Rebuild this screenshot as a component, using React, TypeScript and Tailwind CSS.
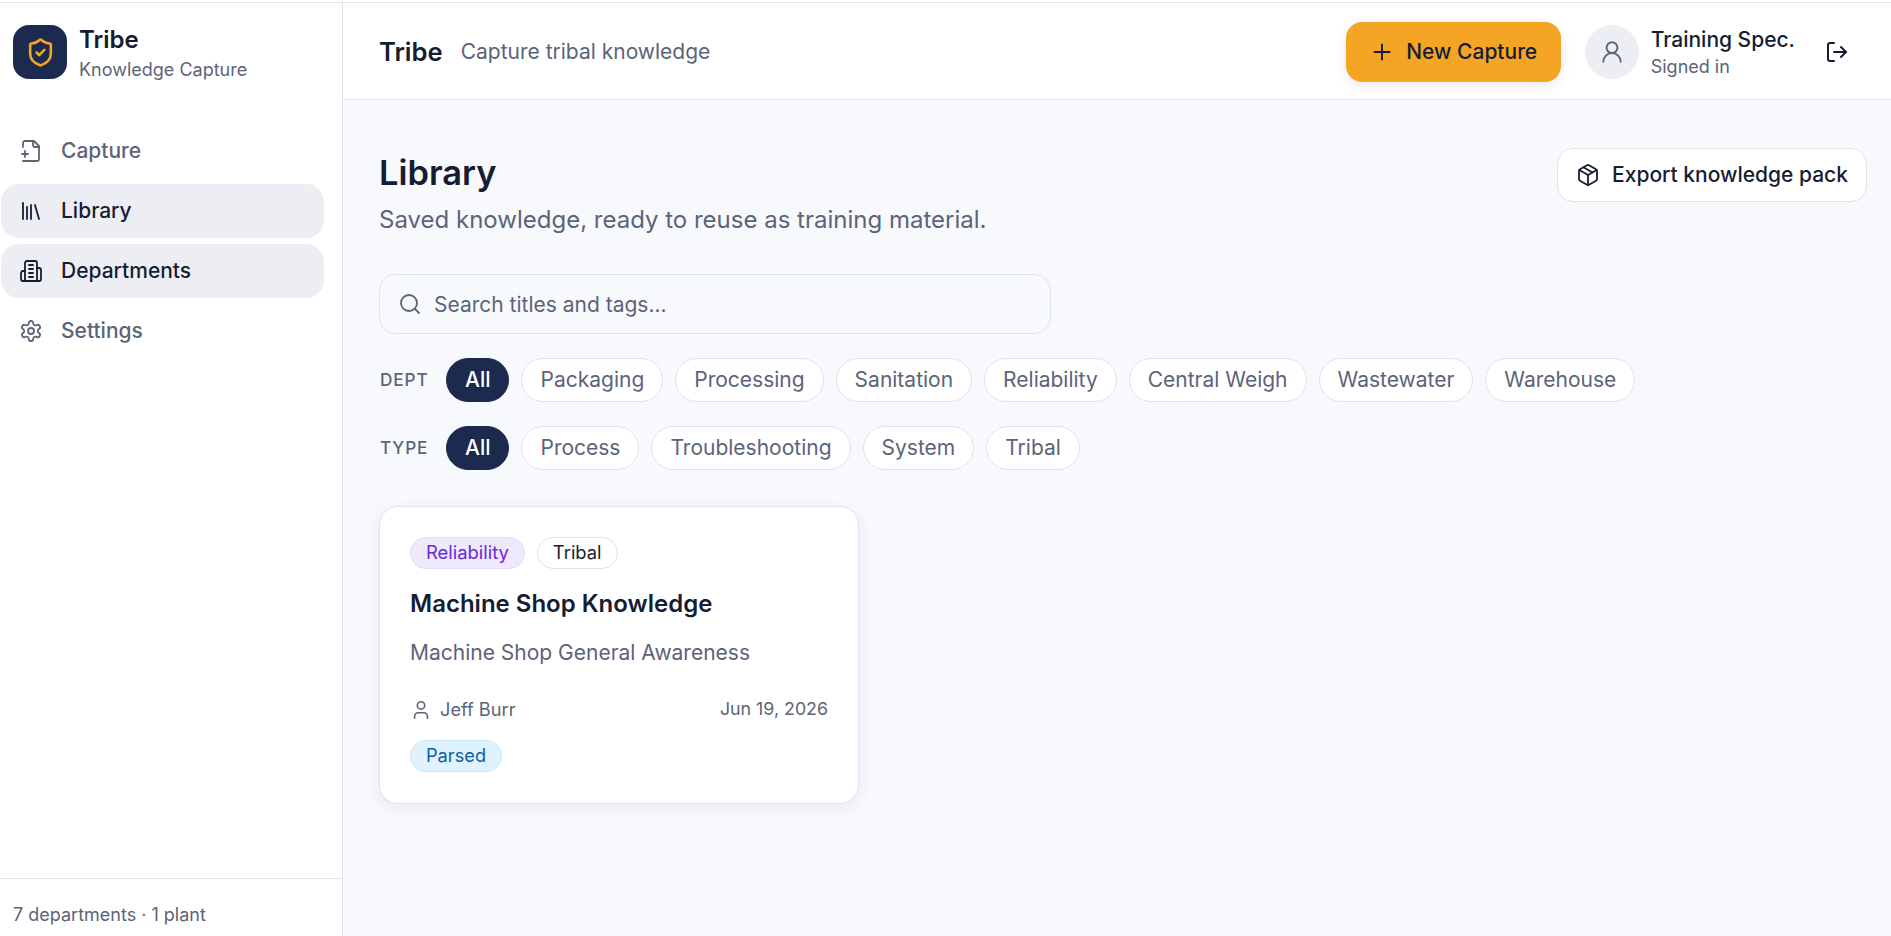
import { Library, LogOut, Package, Plus, Search, ShieldCheck, User, UserRound } from "lucide-react";

const depts = ["All", "Packaging", "Processing", "Sanitation", "Reliability", "Central Weigh", "Wastewater", "Warehouse"];
const types = ["All", "Process", "Troubleshooting", "System", "Tribal"];

function FilePlusIcon() {
  return (
    <svg width="24" height="24" viewBox="0 0 24 24" fill="none" stroke="currentColor" strokeWidth="1.8" strokeLinecap="round" strokeLinejoin="round">
      <path d="M4 22h14a2 2 0 0 0 2-2V7l-5-5H6a2 2 0 0 0-2 2v4" />
      <path d="M14 2v4a2 2 0 0 0 2 2h4" />
      <path d="M3 15h6" />
      <path d="M6 12v6" />
    </svg>
  );
}

function BuildingIcon() {
  return (
    <svg width="24" height="24" viewBox="0 0 24 24" fill="none" stroke="currentColor" strokeWidth="1.8" strokeLinecap="round" strokeLinejoin="round">
      <path d="M6 22V4a2 2 0 0 1 2-2h8a2 2 0 0 1 2 2v18Z" />
      <path d="M6 12H4a2 2 0 0 0-2 2v6a2 2 0 0 0 2 2h2" />
      <path d="M18 9h2a2 2 0 0 1 2 2v9a2 2 0 0 1-2 2h-2" />
      <path d="M10 6h4" />
      <path d="M10 10h4" />
      <path d="M10 14h4" />
      <path d="M10 18h4" />
    </svg>
  );
}

function GearIcon() {
  return (
    <svg width="24" height="24" viewBox="0 0 24 24" fill="none" stroke="currentColor" strokeWidth="1.8" strokeLinecap="round" strokeLinejoin="round">
      <path d="M12.22 2h-.44a2 2 0 0 0-2 2v.18a2 2 0 0 1-1 1.73l-.43.25a2 2 0 0 1-2 0l-.15-.08a2 2 0 0 0-2.73.73l-.22.38a2 2 0 0 0 .73 2.73l.15.1a2 2 0 0 1 1 1.72v.51a2 2 0 0 1-1 1.74l-.15.09a2 2 0 0 0-.73 2.73l.22.38a2 2 0 0 0 2.73.73l.15-.08a2 2 0 0 1 2 0l.43.25a2 2 0 0 1 1 1.73V20a2 2 0 0 0 2 2h.44a2 2 0 0 0 2-2v-.18a2 2 0 0 1 1-1.73l.43-.25a2 2 0 0 1 2 0l.15.08a2 2 0 0 0 2.73-.73l.22-.39a2 2 0 0 0-.73-2.73l-.15-.08a2 2 0 0 1-1-1.74v-.5a2 2 0 0 1 1-1.74l.15-.09a2 2 0 0 0 .73-2.73l-.22-.38a2 2 0 0 0-2.73-.73l-.15.08a2 2 0 0 1-2 0l-.43-.25a2 2 0 0 1-1-1.73V4a2 2 0 0 0-2-2z" />
      <circle cx="12" cy="12" r="3" />
    </svg>
  );
}

function Chip({ label, active }: { label: string; active?: boolean }) {
  return (
    <button
      type="button"
      className={[
        "h-[44px] rounded-full border text-[21px]",
        active ? "border-[#1b2a4e] bg-[#1b2a4e] px-[18px] font-medium text-white" : "border-[#dfe3ec] bg-white px-[18px] text-[#5b6478]",
      ].join(" ")}
    >
      {label}
    </button>
  );
}

function NavItem({ icon, label, active }: { icon: React.ReactNode; label: string; active?: boolean }) {
  return (
    <div
      className={[
        "flex h-[54px] items-center gap-[18px] rounded-[18px] pl-[18px] text-[21px] font-medium",
        active ? "bg-[#edeef3] text-[#161d33]" : "text-[#5b6478]",
      ].join(" ")}
    >
      {icon}
      {label}
    </div>
  );
}

export default function App() {
  return (
    <div className="flex h-[936px] flex-col overflow-hidden bg-white font-['Inter',sans-serif] text-[#161d33]">
      <div className="h-[3px] border-b-[1px] border-[#e3e5ea]" />
      <div className="flex min-h-0 flex-1">
        {/* Sidebar */}
        <aside className="flex w-[343px] flex-col border-r border-[#dfe3ec] bg-white">
          <div className="flex items-start gap-[12px] pl-[13px] pt-[22px]">
            <div className="flex h-[54px] w-[54px] items-center justify-center rounded-[16px] bg-[#1b2a4e]">
              <ShieldCheck size={31} color="#f5a524" strokeWidth={2} />
            </div>
            <div>
              <div className="text-[24px] leading-[30px] font-semibold">Tribe</div>
              <div className="text-[18px] leading-[30px] text-[#5b6478]">Knowledge Capture</div>
            </div>
          </div>
          <nav className="mt-[39px] flex flex-col gap-[6px] pl-[1px] pr-[18px]">
            <NavItem icon={<FilePlusIcon />} label="Capture" />
            <NavItem icon={<Library size={24} strokeWidth={1.8} />} label="Library" active />
            <NavItem icon={<BuildingIcon />} label="Departments" active />
            <NavItem icon={<GearIcon />} label="Settings" />
          </nav>
          <div className="mt-auto flex h-[58px] items-center border-t border-[#dfe3ec] pl-[13px] pt-[13px] text-[18px] text-[#5b6478]">
            7 departments · 1 plant
          </div>
        </aside>

        <div className="flex min-w-0 flex-1 flex-col">
          {/* Header */}
          <header className="flex h-[97px] items-center border-b border-[#dfe3ec] bg-white pl-[36px] pr-[42px] pt-[2px]">
            <span className="text-[25.6px] font-semibold">Tribe</span>
            <span className="ml-[18px] text-[21px] text-[#5b6478]">Capture tribal knowledge</span>
            <button
              type="button"
              className="ml-auto flex h-[60px] w-[215px] items-center justify-center gap-[11px] rounded-[16px] bg-[#f5a524] text-[21px] font-medium shadow-[0_4px_14px_rgba(20,30,60,0.08)]"
            >
              <Plus size={26} strokeWidth={1.8} />
              New Capture
            </button>
            <div className="ml-[24px] flex h-[54px] w-[54px] items-center justify-center rounded-full bg-[#edeef3]">
              <UserRound size={26} color="#5b6478" strokeWidth={1.8} />
            </div>
            <div className="ml-[12px]">
              <div className="text-[21px] leading-[29px] font-medium">Training Spec.</div>
              <div className="text-[18px] leading-[25px] text-[#5b6478]">Signed in</div>
            </div>
            <LogOut className="ml-[30px]" size={24} strokeWidth={2} />
          </header>

          {/* Main */}
          <main className="flex-1 bg-[#f8f9fd] pl-[36px] pr-[24px] pt-[48px]">
            <div className="flex items-start justify-between">
              <div>
                <h1 className="text-[34.4px] leading-[50px] font-semibold">Library</h1>
                <p className="mt-[6px] text-[24px] leading-[32px] text-[#5b6478]">Saved knowledge, ready to reuse as training material.</p>
              </div>
              <button
                type="button"
                className="flex h-[54px] w-[310px] items-center justify-center gap-[12px] rounded-[16px] border border-[#dfe3ec] bg-white text-[21px] font-medium"
              >
                <Package size={24} strokeWidth={1.8} />
                Export knowledge pack
              </button>
            </div>

            <div className="mt-[38px] flex h-[60px] w-[672px] items-center gap-[12px] rounded-[16px] border border-[#dfe3ec] bg-[#f8f9fd] pl-[18px] text-[21px] text-[#5b6478]">
              <Search size={24} strokeWidth={1.8} />
              <span className="pt-[1px]">Search titles and tags...</span>
            </div>

            <div className="mt-[24px] flex items-center gap-[12px]">
              <span className="w-[55px] pl-[1px] text-[17.2px] font-medium tracking-[0.05em] text-[#5b6478]">DEPT</span>
              {depts.map((d) => (
                <Chip key={d} label={d} active={d === "All"} />
              ))}
            </div>
            <div className="mt-[24px] flex items-center gap-[12px]">
              <span className="w-[55px] pl-[1px] text-[17.2px] font-medium tracking-[0.05em] text-[#5b6478]">TYPE</span>
              {types.map((t) => (
                <Chip key={t} label={t} active={t === "All"} />
              ))}
            </div>

            {/* Card */}
            <div className="mt-[36px] h-[298px] w-[480px] rounded-[19px] border border-[#dfe3ec] bg-white px-[30px] pt-[30px] shadow-[0_4px_16px_rgba(20,30,60,0.07)]">
              <div className="flex gap-[12px]">
                <span className="flex h-[32px] items-center rounded-full border border-[#e2d9fb] bg-[#efe9fe] px-[15px] text-[18.4px] text-[#6d28d9]">Reliability</span>
                <span className="flex h-[32px] items-center rounded-full border border-[#dfe3ec] bg-white px-[15px] text-[18.4px]">Tribal</span>
              </div>
              <div className="mt-[19px] text-[24px] leading-[32px] font-semibold">Machine Shop Knowledge</div>
              <div className="mt-[19px] text-[21px] leading-[28px] text-[#5b6478]">Machine Shop General Awareness</div>
              <div className="mt-[29px] flex items-center justify-between text-[18.2px] text-[#5b6478]">
                <span className="flex items-center gap-[8px]">
                  <User size={22} strokeWidth={1.8} />
                  Jeff Burr
                </span>
                <span className="text-[17.8px]">Jun 19, 2026</span>
              </div>
              <span className="mt-[17px] flex h-[32px] w-fit items-center rounded-full border border-[#bfe6fb] bg-[#e0f2fe] px-[15px] pb-[1px] text-[18.2px] text-[#0b5f9e]">Parsed</span>
            </div>
          </main>
        </div>
      </div>
    </div>
  );
}
